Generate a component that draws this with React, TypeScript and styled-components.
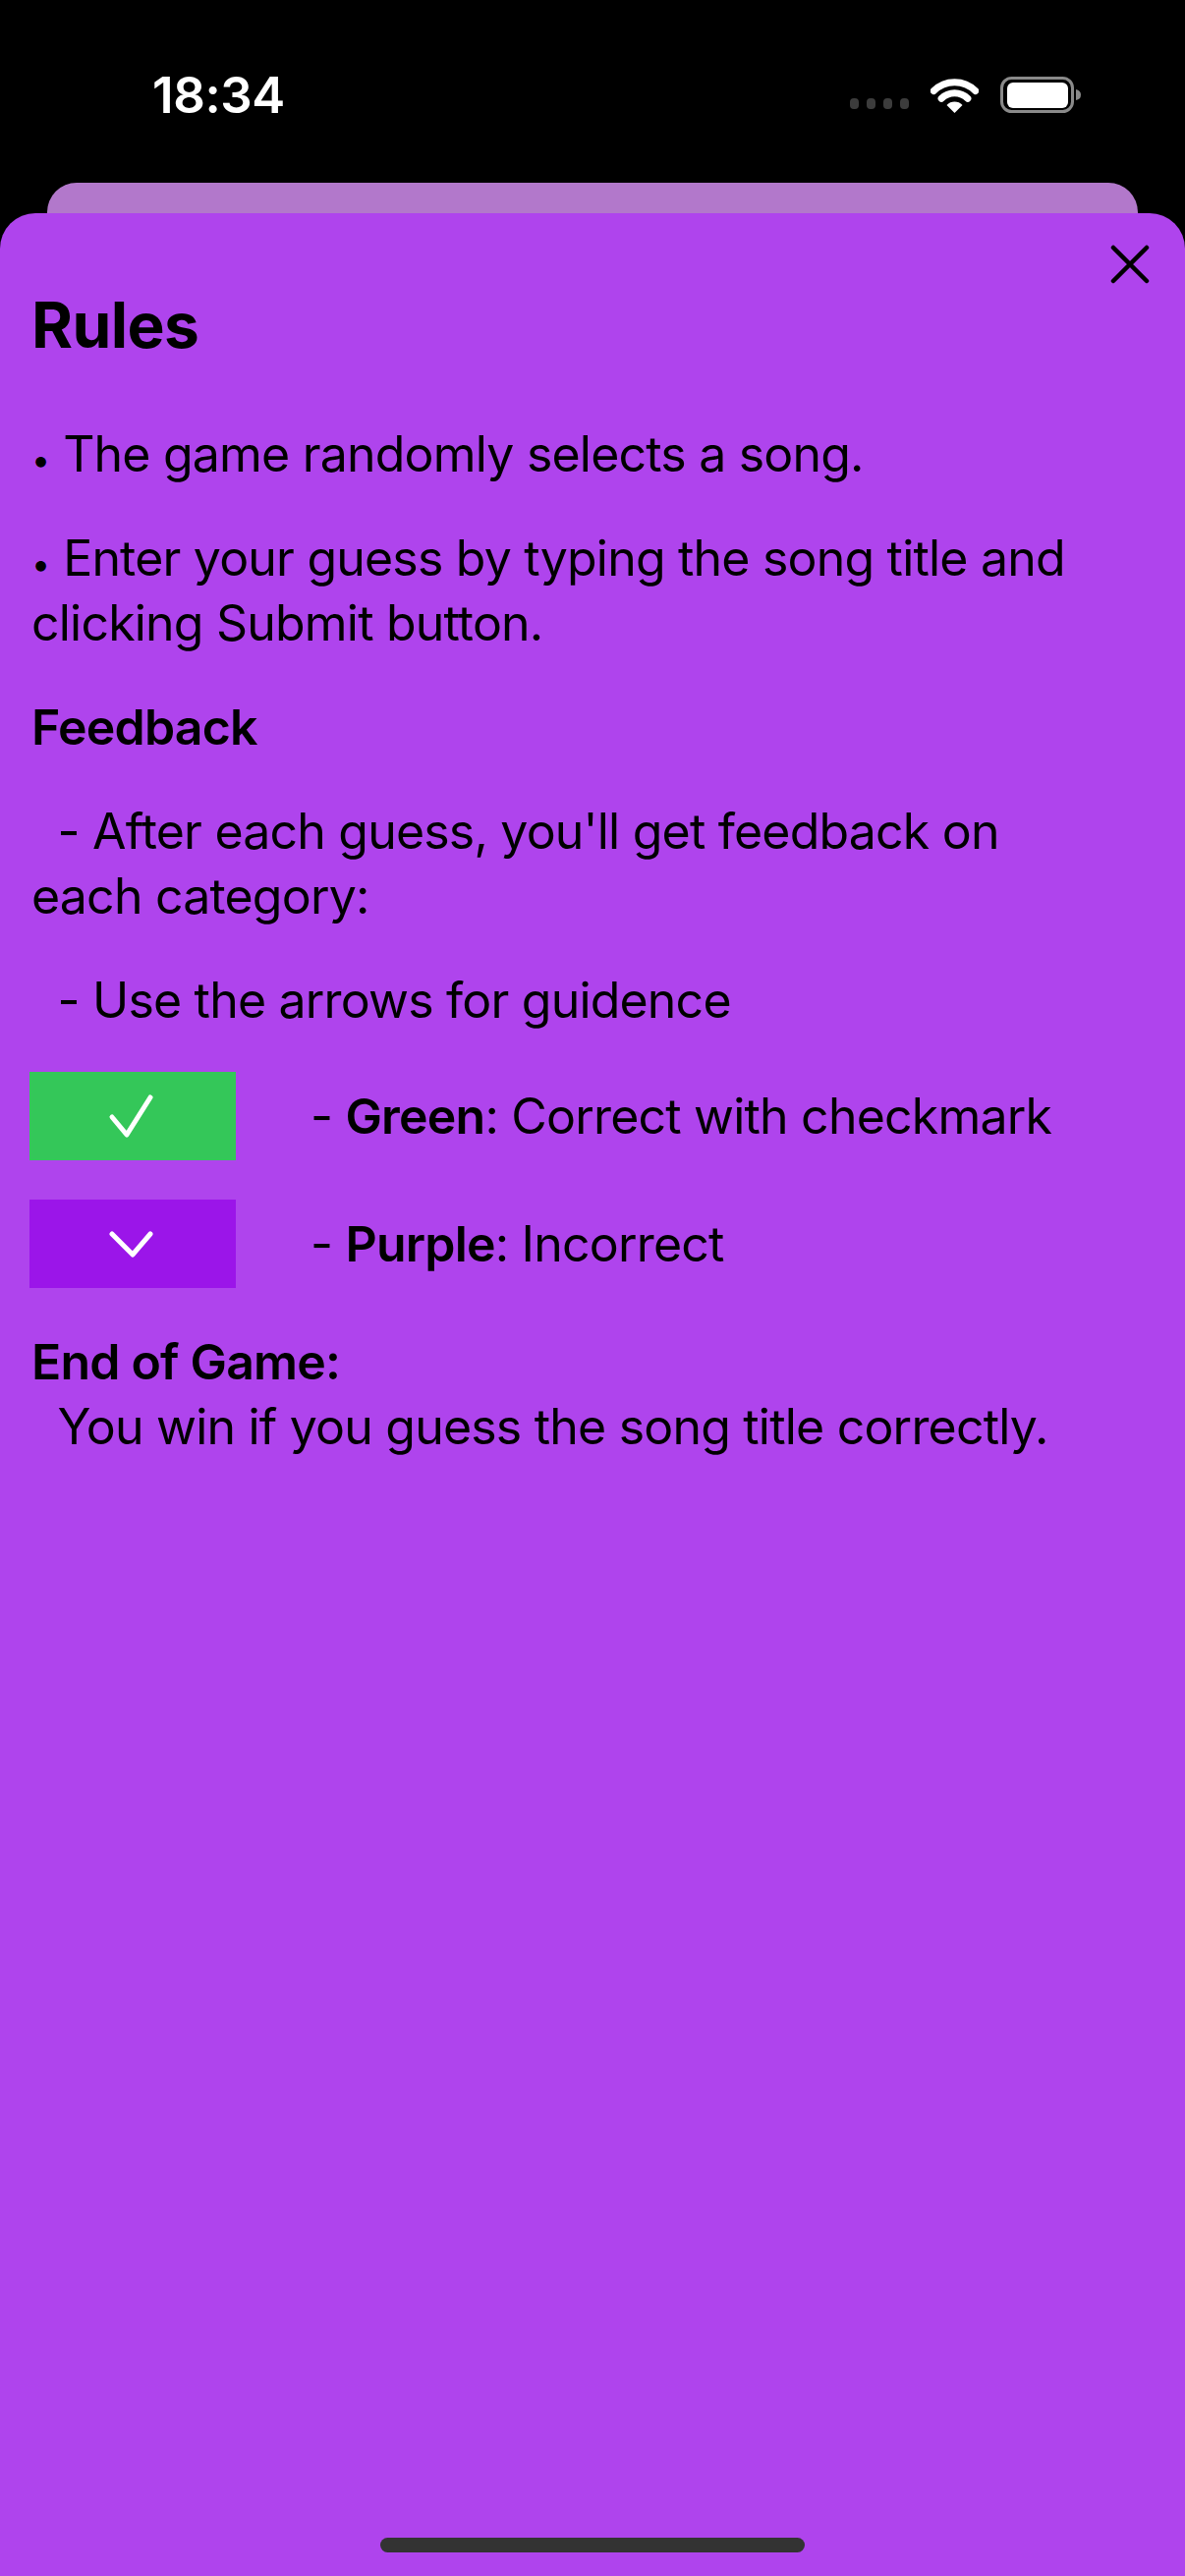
import styled, { createGlobalStyle } from "styled-components";

const GlobalStyle = createGlobalStyle`
  html, body {
    margin: 0;
    padding: 0;
    background: #000;
  }
  * {
    box-sizing: border-box;
  }
`;

const Screen = styled.div`
  width: 1206px;
  height: 2622px;
  background: #000;
  display: flex;
  flex-direction: column;
  overflow: hidden;
  font-family: Inter, "Noto Sans", sans-serif;
  color: #000;
`;

const StatusBar = styled.div`
  height: 186px;
  display: flex;
  align-items: flex-start;
  justify-content: space-between;
  padding: 66px 106px 0 155px;
`;

const Clock = styled.span`
  color: #fff;
  font-size: 51px;
  font-weight: 600;
  line-height: 62px;
  letter-spacing: -0.4px;
`;

const StatusIcons = styled.div`
  display: flex;
  align-items: center;
  gap: 22px;
  margin-top: 12px;
`;

const Dots = styled.div`
  display: flex;
  gap: 8px;
  margin-top: 18px;

  span {
    width: 9px;
    height: 11px;
    border-radius: 4px;
    background: #3c3c3c;
  }
`;

const BackCard = styled.div`
  height: 31px;
  margin: 0 48px;
  background: #b278cb;
  border-radius: 30px 30px 0 0;
`;

const Sheet = styled.div`
  flex: 1;
  background: #af44ed;
  border-radius: 36px 36px 0 0;
  display: flex;
  flex-direction: column;
  padding: 32px 36px 24px 30px;
`;

const CloseRow = styled.div`
  display: flex;
  justify-content: flex-end;
`;

const CloseButton = styled.button`
  width: 40px;
  height: 40px;
  padding: 0;
  border: none;
  background: none;
  display: flex;
`;

const Title = styled.h1`
  margin: 3px 0 0 2px;
  font-size: 64px;
  line-height: 78px;
  font-weight: 700;
  letter-spacing: -0.6px;
`;

const Content = styled.div`
  display: flex;
  flex-direction: column;
  gap: 40px;
  margin-top: 59px;
  padding-right: 60px;
`;

const Paragraph = styled.p<{ $bold?: boolean; $push?: number }>`
  margin: ${(p) => p.$push ?? 0}px 0 0 2px;
  font-size: 50px;
  line-height: 66px;
  font-weight: ${(p) => (p.$bold ? 600 : 400)};
  white-space: pre-wrap;
  letter-spacing: -0.8px;

  strong {
    font-weight: 600;
  }
`;

const Bullet = styled.span`
  display: inline-block;
  font-size: 34px;
  line-height: 34px;
  letter-spacing: 0;
  margin-right: 13px;
`;

const LegendRow = styled.div`
  display: flex;
  align-items: center;
  gap: 74px;
`;

const Swatch = styled.div<{ $color: string }>`
  width: 210px;
  height: 90px;
  background: ${(p) => p.$color};
  display: flex;
  align-items: center;
  justify-content: center;
`;

const HomeIndicator = styled.div`
  margin-top: auto;
  align-self: center;
  width: 432px;
  height: 15px;
  border-radius: 8px;
  background: #333;
  transform: translateX(3px);
`;

const WifiIcon = () => (
  <svg width="49" height="37" viewBox="0 0 49 37">
    <path
      d="M3.3 14.5 A30 30 0 0 1 45.7 14.5"
      fill="none"
      stroke="#fff"
      strokeWidth="7"
      strokeLinecap="round"
    />
    <path
      d="M11.1 22.2 A19 19 0 0 1 37.9 22.2"
      fill="none"
      stroke="#fff"
      strokeWidth="7"
      strokeLinecap="round"
    />
    <path d="M24.5 37 L16.5 29 A11 11 0 0 1 32.5 29 Z" fill="#fff" />
  </svg>
);

const BatteryIcon = () => (
  <svg width="82" height="37" viewBox="0 0 82 37">
    <rect
      x="1.5"
      y="1.5"
      width="72"
      height="34"
      rx="10"
      fill="none"
      stroke="#8a8a8a"
      strokeWidth="3"
    />
    <rect x="7" y="6" width="62" height="26" rx="6" fill="#fff" />
    <path d="M77 13 Q82 14 82 18.5 Q82 23 77 24 Z" fill="#8a8a8a" />
  </svg>
);

const CloseIcon = () => (
  <svg width="40" height="40" viewBox="0 0 40 40">
    <path
      d="M3 3 L37 37 M37 3 L3 37"
      stroke="#000"
      strokeWidth="4.5"
      strokeLinecap="round"
    />
  </svg>
);

const CheckIcon = () => (
  <svg width="210" height="90" viewBox="0 0 210 90">
    <path
      d="M84 46 L99 64 L123 26"
      fill="none"
      stroke="#fff"
      strokeWidth="5"
      strokeLinecap="round"
      strokeLinejoin="round"
    />
  </svg>
);

const ChevronIcon = () => (
  <svg width="210" height="90" viewBox="0 0 210 90">
    <path
      d="M84 35 L105 56 L123 35"
      fill="none"
      stroke="#fff"
      strokeWidth="5"
      strokeLinecap="round"
      strokeLinejoin="round"
    />
  </svg>
);

const App = () => {
  return (
    <Screen>
      <GlobalStyle />
      <StatusBar>
        <Clock>18:34</Clock>
        <StatusIcons>
          <Dots>
            <span />
            <span />
            <span />
            <span />
          </Dots>
          <WifiIcon />
          <BatteryIcon />
        </StatusIcons>
      </StatusBar>
      <BackCard />
      <Sheet>
        <CloseRow>
          <CloseButton aria-label="Close">
            <CloseIcon />
          </CloseButton>
        </CloseRow>
        <Title>Rules</Title>
        <Content>
          <Paragraph>
            <Bullet>•</Bullet>
            {"The game randomly selects a song."}
          </Paragraph>
          <Paragraph>
            <Bullet>•</Bullet>
            {"Enter your guess by typing the song title and clicking Submit button."}
          </Paragraph>
          <Paragraph $bold>Feedback</Paragraph>
          <Paragraph>
            {"  - After each guess, you'll get feedback on each category:"}
          </Paragraph>
          <Paragraph>{"  - Use the arrows for guidence"}</Paragraph>
          <LegendRow>
            <Swatch $color="#34c759">
              <CheckIcon />
            </Swatch>
            <Paragraph>
              - <strong>Green</strong>: Correct with checkmark
            </Paragraph>
          </LegendRow>
          <LegendRow>
            <Swatch $color="#9b15e9">
              <ChevronIcon />
            </Swatch>
            <Paragraph>
              - <strong>Purple</strong>: Incorrect
            </Paragraph>
          </LegendRow>
          <Paragraph $push={2}>
            <strong>End of Game:</strong>
            {"\n  You win if you guess the song title correctly."}
          </Paragraph>
        </Content>
        <HomeIndicator />
      </Sheet>
    </Screen>
  );
};

export default App;
